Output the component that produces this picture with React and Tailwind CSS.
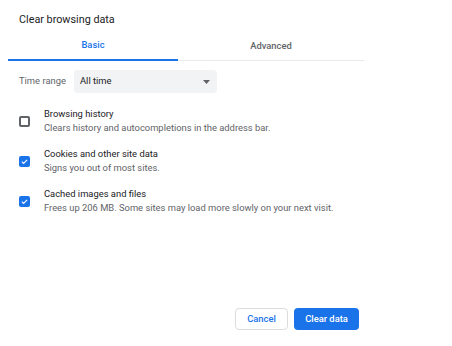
import React from "react";

const items = [
  { title: "Browsing history", sub: "Clears history and autocompletions in the address bar.", checked: false },
  { title: "Cookies and other site data", sub: "Signs you out of most sites.", checked: true },
  { title: "Cached images and files", sub: "Frees up 206 MB. Some sites may load more slowly on your next visit.", checked: true },
];

const Box = ({ checked }) =>
  checked ? (
    <div className="w-[11px] h-[11px] rounded-[2px] bg-[#1a73e8] flex items-center justify-center shrink-0">
      <svg width="9" height="9" viewBox="0 0 24 24" fill="none">
        <path d="M5 12.5l4.5 4.5L19 7.5" stroke="white" strokeWidth="3" />
      </svg>
    </div>
  ) : (
    <div className="w-[11px] h-[11px] rounded-[2px] border-2 border-[#5f6368] shrink-0" />
  );

const App = () => {
  return (
    <div className="w-[452px] h-[346px] bg-white flex flex-col font-['Roboto',sans-serif]">
      <div className="pl-[19px] pt-[12px] text-[10.8px] leading-[16px] text-[#202124]">Clear browsing data</div>

      {/* Tabs */}
      <div className="ml-2 mt-[4px] w-[356px] h-[29px] flex border-b border-[#e8eaed]">
        <div className="w-[170px] flex items-center justify-center text-[9.4px] font-medium text-[#1a73e8] border-b-2 border-[#1a73e8] -mb-px">
          Basic
        </div>
        <div className="flex-1 flex items-center justify-center text-[9.4px] font-medium text-[#5f6368]">
          Advanced
        </div>
      </div>

      {/* Time range */}
      <div className="mt-[9px] ml-[19px] flex items-center">
        <span className="w-[55px] text-[9.4px] text-[#5f6368]">Time range</span>
        <div className="w-[143px] h-[23px] rounded-[4px] bg-[#f1f3f4] flex items-center justify-between pl-[6px] pr-[7px]">
          <span className="text-[9.4px] text-[#202124]">All time</span>
          <svg width="7" height="4" viewBox="0 0 7 4">
            <path d="M0 0h7L3.5 4z" fill="#5f6368" />
          </svg>
        </div>
      </div>

      {/* Options */}
      <div className="mt-[14px] ml-[19px] flex flex-col gap-[12px]">
        {items.map((it) => (
          <div key={it.title} className="flex items-center gap-[14px]">
            <Box checked={it.checked} />
            <div className="text-[9.4px] leading-[14px]">
              <div className="text-[#202124]">{it.title}</div>
              <div className="text-[#5f6368]">{it.sub}</div>
            </div>
          </div>
        ))}
      </div>

      {/* Footer */}
      <div className="mt-auto mb-[16px] mr-[93px] flex justify-end gap-[6px]">
        <button className="w-[53px] h-[22px] rounded-[4px] border border-[#dadce0] text-[9.4px] font-medium text-[#1a73e8] bg-white">
          Cancel
        </button>
        <button className="w-[65px] h-[22px] rounded-[4px] bg-[#1a73e8] text-[9.4px] font-medium text-white">
          Clear data
        </button>
      </div>
    </div>
  );
};

export default App;
